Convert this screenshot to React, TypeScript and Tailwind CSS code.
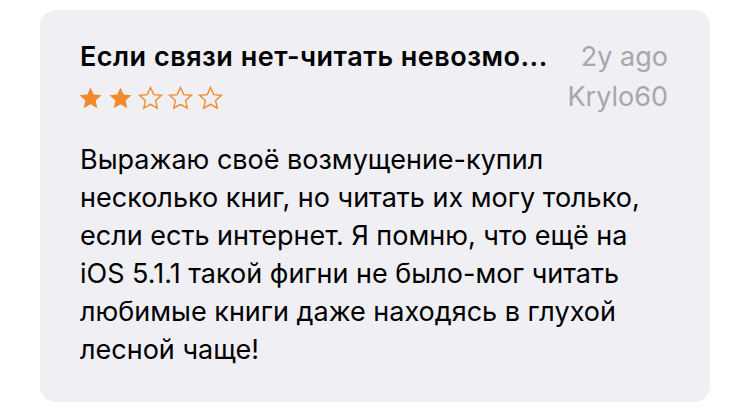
import React from "react";

const Star = ({ filled }: { filled: boolean }) => (
  <svg width="27" height="27" viewBox="0 0 24 24" className="block">
    <path
      d="M12 2.2l2.85 6.3 6.85.7-5.15 4.6 1.45 6.8L12 17.2l-6 3.4 1.45-6.8L2.3 9.2l6.85-.7z"
      fill={filled ? "#f18a2c" : "none"}
      stroke="#f18a2c"
      strokeWidth={filled ? 0 : 1.2}
      strokeLinejoin="miter"
    />
  </svg>
);

const lines = [
  "Выражаю своё возмущение-купил",
  "несколько книг, но читать их могу только,",
  "если есть интернет. Я помню, что ещё на",
  "iOS 5.1.1 такой фигни не было-мог читать",
  "любимые книги даже находясь в глухой",
  "лесной чаще!",
];

export default function App() {
  return (
    <div
      className="w-[750px] h-[418px] bg-white pt-[10px] px-[40px]"
      style={{ fontFamily: "Inter, 'Noto Sans', sans-serif" }}
    >
      <div className="w-[670px] h-[392px] rounded-[16px] bg-[#efeff4] pl-[40px] pr-[42px] pt-[29px]">
        <div className="flex justify-between items-center h-[36px]">
          <div className="text-[27px] font-semibold text-black tracking-[0.5px]">
            Если связи нет-читать невозмо...
          </div>
          <div className="text-[27px] text-[#a7a7ac]">2y ago</div>
        </div>
        <div className="flex justify-between items-center h-[36px] mt-[4px]">
          <div className="flex gap-[3px] -ml-[3px] mt-[3px]">
            <Star filled />
            <Star filled />
            <Star filled={false} />
            <Star filled={false} />
            <Star filled={false} />
          </div>
          <div className="text-[27px] text-[#a7a7ac]">Krylo60</div>
        </div>
        <p className="mt-[26px] text-[27px] leading-[38px] text-black whitespace-nowrap">
          {lines.map((l, i) => (
            <span key={i} className="block">
              {l}
            </span>
          ))}
        </p>
      </div>
    </div>
  );
}
